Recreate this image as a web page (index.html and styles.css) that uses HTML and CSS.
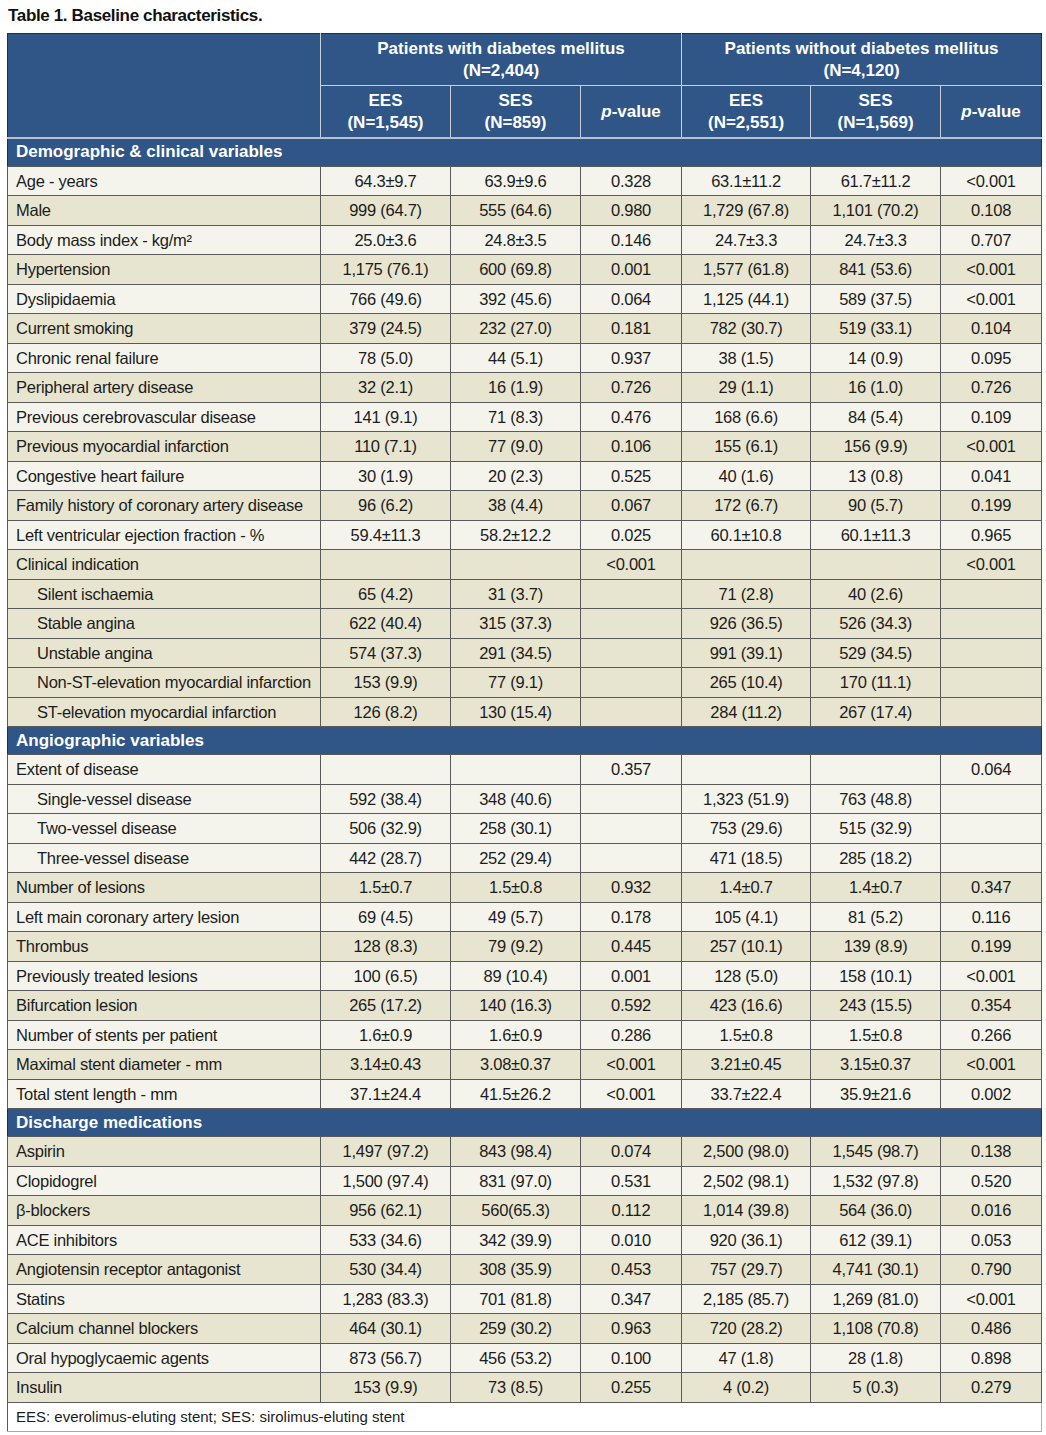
FILE: index.html
```html
<!DOCTYPE html>
<html>
<head>
<meta charset="utf-8">
<link rel="stylesheet" href="styles.css">
</head>
<body>
<h1 class="title">Table 1. Baseline characteristics.</h1>
<table class="tbl">
<colgroup>
<col class="c-label"><col class="c-n"><col class="c-n"><col class="c-p"><col class="c-n2"><col class="c-n"><col class="c-p">
</colgroup>
<thead>
<tr class="h1">
<th rowspan="2" class="h-blank"></th>
<th colspan="3">Patients with diabetes mellitus<br>(N=2,404)</th>
<th colspan="3">Patients without diabetes mellitus<br>(N=4,120)</th>
</tr>
<tr class="h2">
<th>EES<br>(N=1,545)</th>
<th>SES<br>(N=859)</th>
<th><i>p</i>-value</th>
<th>EES<br>(N=2,551)</th>
<th>SES<br>(N=1,569)</th>
<th><i>p</i>-value</th>
</tr>
</thead>
<tbody>
<tr class="sec first"><td colspan="7">Demographic &amp; clinical variables</td></tr>
<tr class="lt"><td>Age - years</td><td>64.3±9.7</td><td>63.9±9.6</td><td>0.328</td><td>63.1±11.2</td><td>61.7±11.2</td><td>&lt;0.001</td></tr>
<tr class="dk"><td>Male</td><td>999 (64.7)</td><td>555 (64.6)</td><td>0.980</td><td>1,729 (67.8)</td><td>1,101 (70.2)</td><td>0.108</td></tr>
<tr class="lt"><td>Body mass index - kg/m²</td><td>25.0±3.6</td><td>24.8±3.5</td><td>0.146</td><td>24.7±3.3</td><td>24.7±3.3</td><td>0.707</td></tr>
<tr class="dk"><td>Hypertension</td><td>1,175 (76.1)</td><td>600 (69.8)</td><td>0.001</td><td>1,577 (61.8)</td><td>841 (53.6)</td><td>&lt;0.001</td></tr>
<tr class="lt"><td>Dyslipidaemia</td><td>766 (49.6)</td><td>392 (45.6)</td><td>0.064</td><td>1,125 (44.1)</td><td>589 (37.5)</td><td>&lt;0.001</td></tr>
<tr class="dk"><td>Current smoking</td><td>379 (24.5)</td><td>232 (27.0)</td><td>0.181</td><td>782 (30.7)</td><td>519 (33.1)</td><td>0.104</td></tr>
<tr class="lt"><td>Chronic renal failure</td><td>78 (5.0)</td><td>44 (5.1)</td><td>0.937</td><td>38 (1.5)</td><td>14 (0.9)</td><td>0.095</td></tr>
<tr class="dk"><td>Peripheral artery disease</td><td>32 (2.1)</td><td>16 (1.9)</td><td>0.726</td><td>29 (1.1)</td><td>16 (1.0)</td><td>0.726</td></tr>
<tr class="lt"><td>Previous cerebrovascular disease</td><td>141 (9.1)</td><td>71 (8.3)</td><td>0.476</td><td>168 (6.6)</td><td>84 (5.4)</td><td>0.109</td></tr>
<tr class="dk"><td>Previous myocardial infarction</td><td>110 (7.1)</td><td>77 (9.0)</td><td>0.106</td><td>155 (6.1)</td><td>156 (9.9)</td><td>&lt;0.001</td></tr>
<tr class="lt"><td>Congestive heart failure</td><td>30 (1.9)</td><td>20 (2.3)</td><td>0.525</td><td>40 (1.6)</td><td>13 (0.8)</td><td>0.041</td></tr>
<tr class="dk"><td>Family history of coronary artery disease</td><td>96 (6.2)</td><td>38 (4.4)</td><td>0.067</td><td>172 (6.7)</td><td>90 (5.7)</td><td>0.199</td></tr>
<tr class="lt"><td>Left ventricular ejection fraction - %</td><td>59.4±11.3</td><td>58.2±12.2</td><td>0.025</td><td>60.1±10.8</td><td>60.1±11.3</td><td>0.965</td></tr>
<tr class="dk"><td>Clinical indication</td><td></td><td></td><td>&lt;0.001</td><td></td><td></td><td>&lt;0.001</td></tr>
<tr class="dk sub"><td>Silent ischaemia</td><td>65 (4.2)</td><td>31 (3.7)</td><td></td><td>71 (2.8)</td><td>40 (2.6)</td><td></td></tr>
<tr class="dk sub"><td>Stable angina</td><td>622 (40.4)</td><td>315 (37.3)</td><td></td><td>926 (36.5)</td><td>526 (34.3)</td><td></td></tr>
<tr class="dk sub"><td>Unstable angina</td><td>574 (37.3)</td><td>291 (34.5)</td><td></td><td>991 (39.1)</td><td>529 (34.5)</td><td></td></tr>
<tr class="dk sub"><td>Non-ST-elevation myocardial infarction</td><td>153 (9.9)</td><td>77 (9.1)</td><td></td><td>265 (10.4)</td><td>170 (11.1)</td><td></td></tr>
<tr class="dk sub"><td>ST-elevation myocardial infarction</td><td>126 (8.2)</td><td>130 (15.4)</td><td></td><td>284 (11.2)</td><td>267 (17.4)</td><td></td></tr>
<tr class="sec"><td colspan="7">Angiographic variables</td></tr>
<tr class="lt"><td>Extent of disease</td><td></td><td></td><td>0.357</td><td></td><td></td><td>0.064</td></tr>
<tr class="lt sub"><td>Single-vessel disease</td><td>592 (38.4)</td><td>348 (40.6)</td><td></td><td>1,323 (51.9)</td><td>763 (48.8)</td><td></td></tr>
<tr class="lt sub"><td>Two-vessel disease</td><td>506 (32.9)</td><td>258 (30.1)</td><td></td><td>753 (29.6)</td><td>515 (32.9)</td><td></td></tr>
<tr class="lt sub"><td>Three-vessel disease</td><td>442 (28.7)</td><td>252 (29.4)</td><td></td><td>471 (18.5)</td><td>285 (18.2)</td><td></td></tr>
<tr class="dk"><td>Number of lesions</td><td>1.5±0.7</td><td>1.5±0.8</td><td>0.932</td><td>1.4±0.7</td><td>1.4±0.7</td><td>0.347</td></tr>
<tr class="lt"><td>Left main coronary artery lesion</td><td>69 (4.5)</td><td>49 (5.7)</td><td>0.178</td><td>105 (4.1)</td><td>81 (5.2)</td><td>0.116</td></tr>
<tr class="dk"><td>Thrombus</td><td>128 (8.3)</td><td>79 (9.2)</td><td>0.445</td><td>257 (10.1)</td><td>139 (8.9)</td><td>0.199</td></tr>
<tr class="lt"><td>Previously treated lesions</td><td>100 (6.5)</td><td>89 (10.4)</td><td>0.001</td><td>128 (5.0)</td><td>158 (10.1)</td><td>&lt;0.001</td></tr>
<tr class="dk"><td>Bifurcation lesion</td><td>265 (17.2)</td><td>140 (16.3)</td><td>0.592</td><td>423 (16.6)</td><td>243 (15.5)</td><td>0.354</td></tr>
<tr class="lt"><td>Number of stents per patient</td><td>1.6±0.9</td><td>1.6±0.9</td><td>0.286</td><td>1.5±0.8</td><td>1.5±0.8</td><td>0.266</td></tr>
<tr class="dk"><td>Maximal stent diameter - mm</td><td>3.14±0.43</td><td>3.08±0.37</td><td>&lt;0.001</td><td>3.21±0.45</td><td>3.15±0.37</td><td>&lt;0.001</td></tr>
<tr class="lt"><td>Total stent length - mm</td><td>37.1±24.4</td><td>41.5±26.2</td><td>&lt;0.001</td><td>33.7±22.4</td><td>35.9±21.6</td><td>0.002</td></tr>
<tr class="sec"><td colspan="7">Discharge medications</td></tr>
<tr class="dk"><td>Aspirin</td><td>1,497 (97.2)</td><td>843 (98.4)</td><td>0.074</td><td>2,500 (98.0)</td><td>1,545 (98.7)</td><td>0.138</td></tr>
<tr class="lt"><td>Clopidogrel</td><td>1,500 (97.4)</td><td>831 (97.0)</td><td>0.531</td><td>2,502 (98.1)</td><td>1,532 (97.8)</td><td>0.520</td></tr>
<tr class="dk"><td>β-blockers</td><td>956 (62.1)</td><td>560(65.3)</td><td>0.112</td><td>1,014 (39.8)</td><td>564 (36.0)</td><td>0.016</td></tr>
<tr class="lt"><td>ACE inhibitors</td><td>533 (34.6)</td><td>342 (39.9)</td><td>0.010</td><td>920 (36.1)</td><td>612 (39.1)</td><td>0.053</td></tr>
<tr class="dk"><td>Angiotensin receptor antagonist</td><td>530 (34.4)</td><td>308 (35.9)</td><td>0.453</td><td>757 (29.7)</td><td>4,741 (30.1)</td><td>0.790</td></tr>
<tr class="lt"><td>Statins</td><td>1,283 (83.3)</td><td>701 (81.8)</td><td>0.347</td><td>2,185 (85.7)</td><td>1,269 (81.0)</td><td>&lt;0.001</td></tr>
<tr class="dk"><td>Calcium channel blockers</td><td>464 (30.1)</td><td>259 (30.2)</td><td>0.963</td><td>720 (28.2)</td><td>1,108 (70.8)</td><td>0.486</td></tr>
<tr class="lt"><td>Oral hypoglycaemic agents</td><td>873 (56.7)</td><td>456 (53.2)</td><td>0.100</td><td>47 (1.8)</td><td>28 (1.8)</td><td>0.898</td></tr>
<tr class="dk"><td>Insulin</td><td>153 (9.9)</td><td>73 (8.5)</td><td>0.255</td><td>4 (0.2)</td><td>5 (0.3)</td><td>0.279</td></tr>
</tbody>
<tfoot>
<tr class="foot"><td colspan="7">EES: everolimus-eluting stent; SES: sirolimus-eluting stent</td></tr>
</tfoot>
</table>
</body>
</html>
```

FILE: styles.css
```css
html, body {
  margin: 0;
  padding: 0;
  background: #ffffff;
}

body {
  font-family: "Liberation Sans", Arial, sans-serif;
  color: #1c1c1c;
}

.title {
  margin: 0;
  padding: 7px 0 0 8px;
  height: 26px;
  box-sizing: border-box;
  font-size: 17px;
  letter-spacing: -0.35px;
  line-height: 18px;
  font-weight: bold;
  color: #111;
}

.tbl {
  margin: 7px 0 0 7px;
  border-collapse: collapse;
  table-layout: fixed;
  width: 1035px;
  font-size: 16.5px;
  letter-spacing: -0.25px;
}

.c-label { width: 313px; }
.c-n { width: 130px; }
.c-n2 { width: 129px; }
.c-p { width: 101px; }

/* header */
.tbl thead th {
  background: #2f5687;
  color: #ffffff;
  font-weight: bold;
  font-size: 17px;
  letter-spacing: 0;
  line-height: 22px;
  padding: 0;
  border: 1px solid #c9d0dc;
  text-align: center;
  vertical-align: middle;
}

.tbl thead tr.h1 th {
  border-top: 1px solid #1f2f45;
  height: 51px;
}

.tbl thead tr.h2 th {
  height: 51px;
  border-bottom: 2px solid #b7c1d0;
}

.tbl thead th.h-blank {
  border-left: 1px solid #1f2f45;
  border-bottom: 2px solid #b7c1d0;
}

.tbl thead th:last-child {
  border-right: 1px solid #1f2f45;
}

.tbl thead i {
  font-style: italic;
}

/* body */
.tbl tbody td {
  border: 1px solid #5a5a5a;
  padding: 0;
  text-align: center;
  vertical-align: middle;
  line-height: 18px;
  white-space: nowrap;
}

.tbl tbody tr {
  height: 29.5px;
}

.tbl tbody td:first-child {
  text-align: left;
  padding-left: 8px;
}

.tbl tbody tr.sub td:first-child {
  padding-left: 29px;
}

.tbl tbody tr.lt td { background: #f4f4ec; }
.tbl tbody tr.dk td { background: #e7e4cf; }

.tbl tbody tr.sec {
  height: 28px;
}

.tbl tbody tr.sec td {
  background: #2f5687;
  color: #ffffff;
  font-weight: bold;
  font-size: 17px;
  letter-spacing: 0;
  border-left: 1px solid #1f2f45;
  border-right: 1px solid #1f2f45;
}

.tbl tbody tr.sec.first td {
  border-top: 2px solid #b7c1d0;
}

/* footnote */
.tbl tfoot td {
  background: #ffffff;
  height: 28px;
  padding: 0 0 0 8px;
  font-size: 15px;
  letter-spacing: 0;
  line-height: 18px;
  color: #1c1c1c;
  border-left: 1px solid #5a5a5a;
  border-right: 1px solid #b0b0b0;
  border-bottom: 1px solid #a8a8a8;
  border-top: 1px solid #5a5a5a;
}
```
